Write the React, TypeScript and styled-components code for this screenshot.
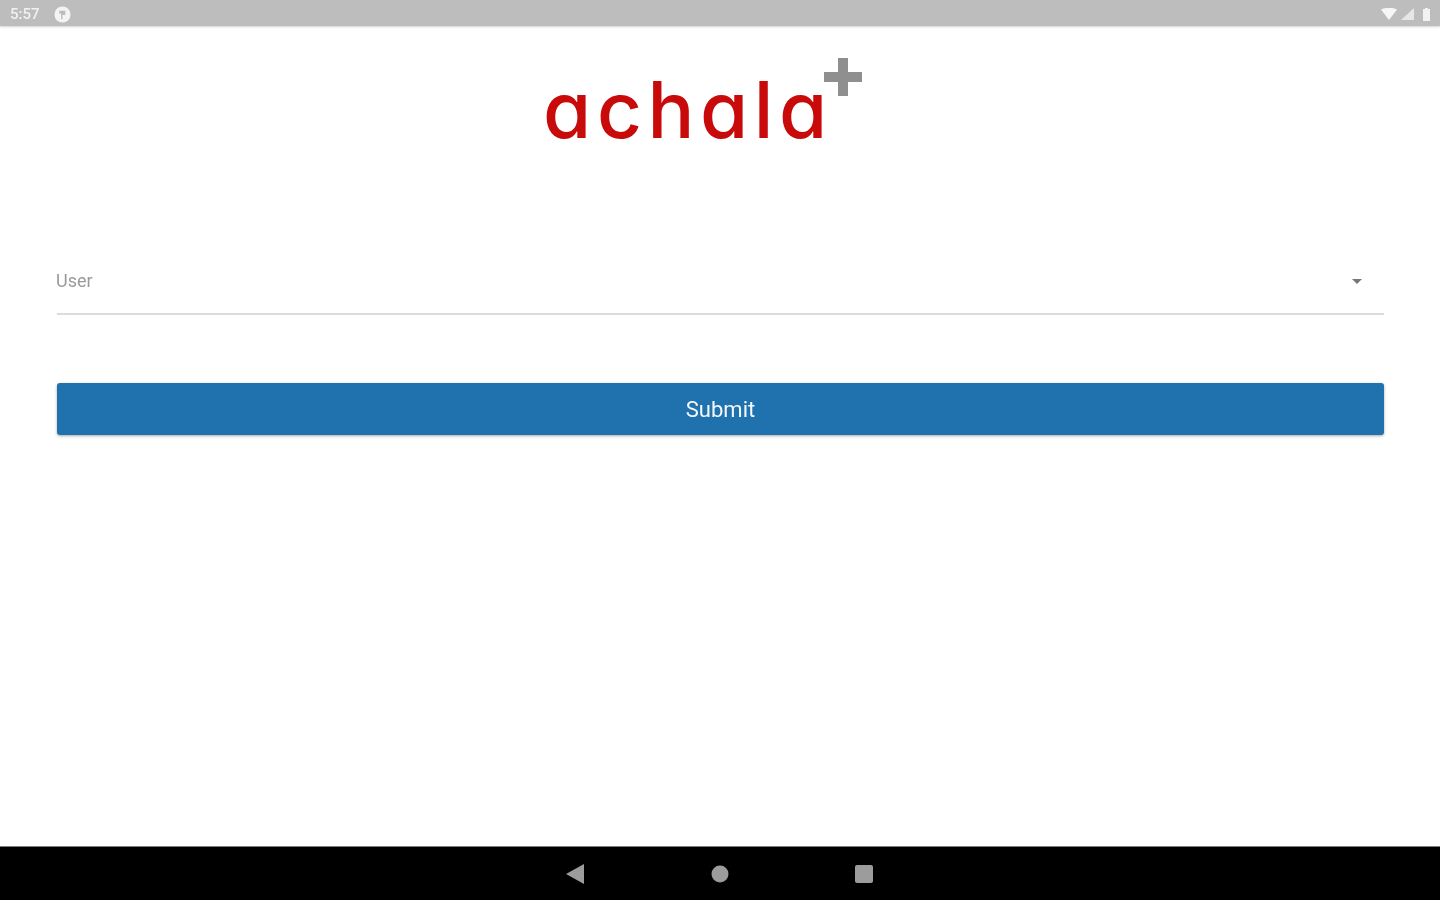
import styled, { createGlobalStyle } from 'styled-components';

//== style ==//
const Global = createGlobalStyle`
    html, body {
        margin: 0;
        padding: 0;
        height: 100%;
        background: #fff;
        font-family: Roboto, "Liberation Sans", sans-serif;
    }
`;

const Screen = styled.div`
    width: 1440px;
    height: 900px;
    display: flex;
    flex-direction: column;
    overflow: hidden;
    background: #fff;
`;

const StatusBar = styled.header`
    height: 26px;
    flex: none;
    display: flex;
    align-items: center;
    justify-content: space-between;
    padding: 2px 8px 0 10px;
    box-sizing: border-box;
    background: #bdbdbd;
    box-shadow: 0 1px 2px rgba(0,0,0,0.18);
`;

const StatusGroup = styled.div<{ $gap: number }>`
    display: flex;
    align-items: center;
    gap: ${props => props.$gap}px;
`;

const Time = styled.span`
    width: 30px;
    color: #f1f1f1;
    font-size: 15px;
    font-weight: 500;
    line-height: 16px;
    white-space: nowrap;
    filter: blur(0.7px);
`;

const Main = styled.main`
    flex: 1;
    display: flex;
    flex-direction: column;
    padding: 0 56px 0 57px;
`;

const LogoRow = styled.div`
    height: 120px;
    display: flex;
    justify-content: center;
    align-items: flex-start;
`;

const Logo = styled.div`
    position: relative;
    margin: 37px 0 0 -65px;
    color: #c90a0a;
    font-family: Inter, sans-serif;
    font-feature-settings: "cv11" 1;
    font-size: 78px;
    font-weight: 500;
    line-height: 94px;
    letter-spacing: 5.6px;
    filter: blur(0.5px);
`;

const LogoPlus = styled.svg`
    position: absolute;
    top: -5px;
    right: -29px;
`;

const Field = styled.div`
    height: 75px;
    margin-top: 94px;
    box-sizing: border-box;
    display: flex;
    align-items: center;
    justify-content: space-between;
    padding: 0 22px 0 0;
    border-bottom: 2px solid #dcdcdc;
`;

const Placeholder = styled.span`
    margin: 9px 0 0 -1px;
    color: #9a9a9a;
    font-size: 18px;
    line-height: 20px;
    filter: blur(0.5px);
`;

const Caret = styled.i`
    width: 0;
    height: 0;
    margin-top: 10px;
    border-left: 5px solid transparent;
    border-right: 5px solid transparent;
    border-top: 5px solid #777;
`;

const SubmitButton = styled.button`
    height: 52px;
    margin-top: 68px;
    border: 0;
    border-radius: 3px;
    padding: 2px 0 0;
    background: #1f72ad;
    box-shadow: 0 1px 3px rgba(0,0,0,0.35);
    color: #f4f8fb;
    font-family: Roboto, sans-serif;
    font-size: 22px;
    font-weight: 400;
    line-height: 50px;
    text-align: center;

    span {
        display: inline-block;
        filter: blur(0.5px);
    }
`;

const NavBar = styled.nav`
    height: 54px;
    flex: none;
    box-sizing: border-box;
    display: flex;
    align-items: center;
    justify-content: center;
    gap: 126px;
    border-top: 1px solid #7d7d7d;
    background: #000;
`;

const BackIcon = styled.svg`
    margin: 0 1px 0 -1px;
`;

const BatteryIcon = styled.svg`
    margin-left: 4px;
`;

//== component ==//
export default function App() {
    return (
        <Screen>
            <Global />
            <StatusBar>
                <StatusGroup $gap={14}>
                    <Time>5:57</Time>
                    <svg width="17" height="17" viewBox="0 0 18 18">
                        <circle cx="9" cy="9" r="8.5" fill="#f4f4f4" />
                        <path d="M5.5 5h6.5v4.5H9V14H7.5V8H5.5z" fill="#bdbdbd" />
                    </svg>
                </StatusGroup>
                <StatusGroup $gap={4}>
                    <svg width="16" height="12" viewBox="0 0 16 12">
                        <path d="M0 1.5Q8-2 16 1.5L8 12z" fill="#f6f6f6" />
                    </svg>
                    <svg width="13" height="12" viewBox="0 0 13 12">
                        <path d="M13 0V12H0z" fill="#e6e6e6" />
                    </svg>
                    <BatteryIcon width="10" height="14" viewBox="0 0 10 14">
                        <path d="M1 2h2V1h3v1h2v12H1z" fill="#f2f2f2" />
                    </BatteryIcon>
                </StatusGroup>
            </StatusBar>
            <Main>
                <LogoRow>
                    <Logo>
                        achala
                        <LogoPlus width="38" height="38" viewBox="0 0 38 38">
                            <path d="M14 0h10v14h14v10H24v14H14V24H0V14h14z" fill="#8f8f8f" />
                        </LogoPlus>
                    </Logo>
                </LogoRow>
                <Field>
                    <Placeholder>User</Placeholder>
                    <Caret />
                </Field>
                <SubmitButton><span>Submit</span></SubmitButton>
            </Main>
            <NavBar>
                <BackIcon width="18" height="20" viewBox="0 0 18 20">
                    <path d="M18 0V20L0 10z" fill="#9c9c9c" />
                </BackIcon>
                <svg width="18" height="18" viewBox="0 0 18 18">
                    <circle cx="9" cy="9" r="8.5" fill="#9c9c9c" />
                </svg>
                <svg width="18" height="18" viewBox="0 0 18 18">
                    <rect width="18" height="18" rx="2" fill="#9c9c9c" />
                </svg>
            </NavBar>
        </Screen>
    );
}
